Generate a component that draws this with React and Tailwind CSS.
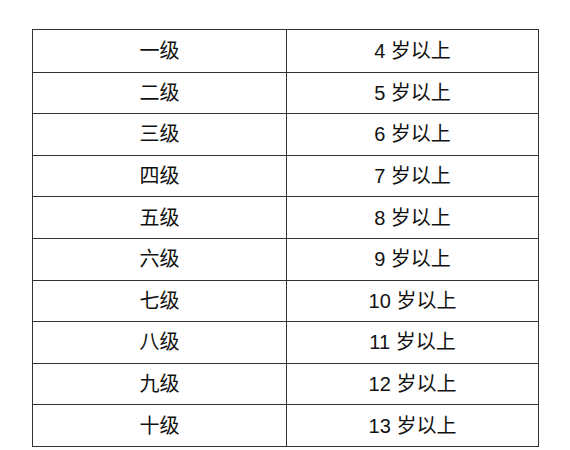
const rows = [
  ['一级', '4 岁以上'],
  ['二级', '5 岁以上'],
  ['三级', '6 岁以上'],
  ['四级', '7 岁以上'],
  ['五级', '8 岁以上'],
  ['六级', '9 岁以上'],
  ['七级', '10 岁以上'],
  ['八级', '11 岁以上'],
  ['九级', '12 岁以上'],
  ['十级', '13 岁以上'],
]

export default function App() {
  return (
    <div
      className="w-[570px] h-[450px] bg-white pt-[29px] pl-[32px] text-[#111]"
      style={{ fontFamily: '"Liberation Sans", "Noto Sans CJK SC", sans-serif' }}
    >
      <div className="w-[507px] border border-[#333]">
        {rows.map(([level, age], i) => (
          <div
            key={level}
            className={`flex h-[41.6px] ${i > 0 ? 'border-t border-[#333]' : ''}`}
          >
            <div className="w-[254px] border-r border-[#333] flex items-center justify-center text-[20px]">
              {level}
            </div>
            <div className="flex-1 flex items-center justify-center text-[20px]">
              {age}
            </div>
          </div>
        ))}
      </div>
    </div>
  )
}
